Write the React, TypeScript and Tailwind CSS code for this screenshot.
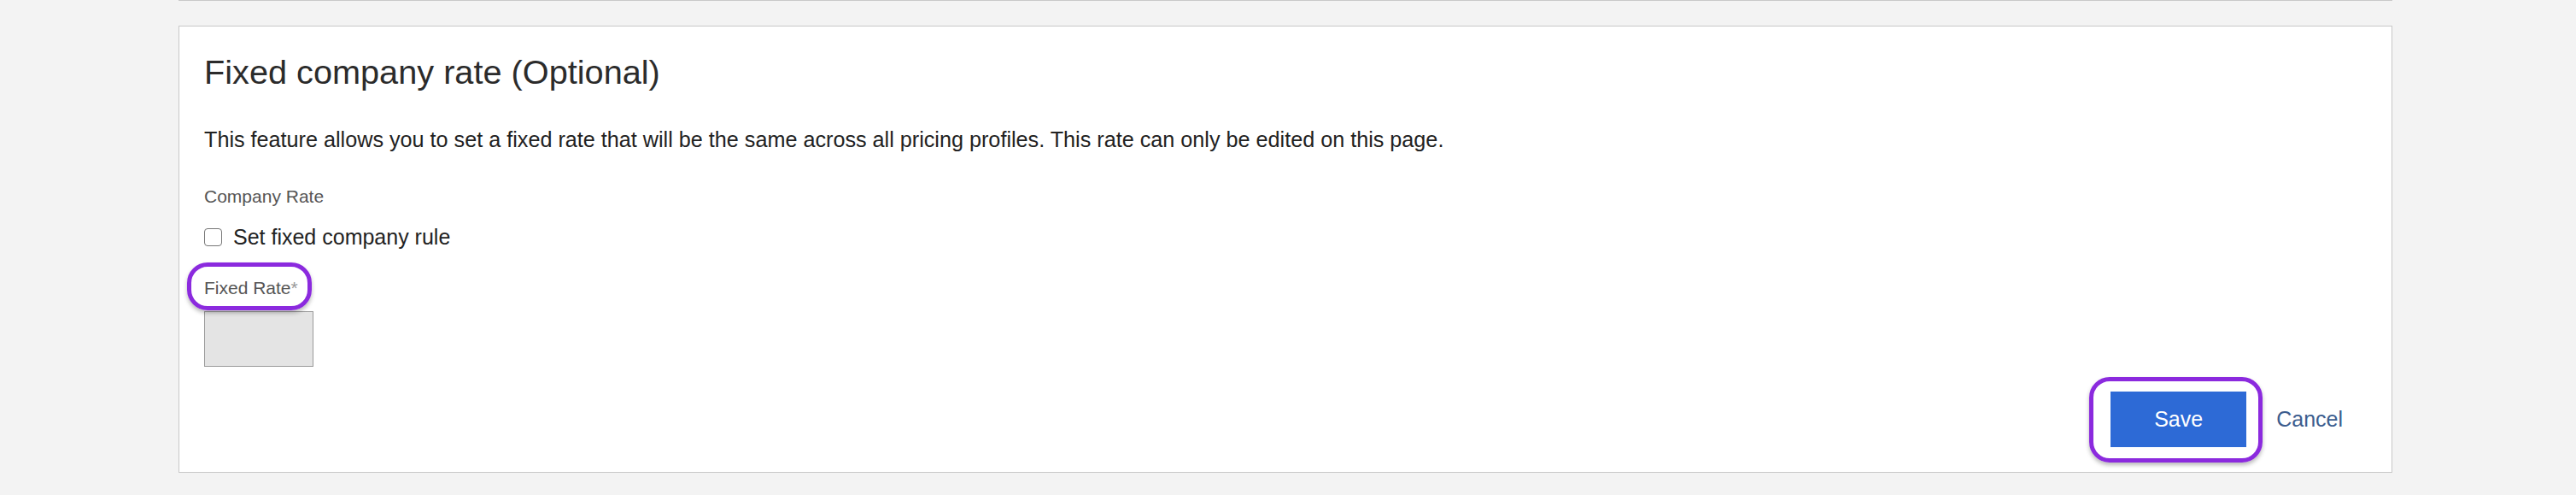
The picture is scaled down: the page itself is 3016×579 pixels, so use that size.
import { useState } from "react";

// annotation ring drawn around highlighted controls
function Ring({ className }: { className: string }) {
  return (
    <span
      className={`pointer-events-none absolute rounded-[24px] border-[5px] border-[#8b2ade] shadow-[0_3px_5px_rgba(0,0,0,0.28)] ${className}`}
    />
  );
}

export default function App() {
  const [fixed, setFixed] = useState(false);

  return (
    <div className="min-h-[579px] bg-[#f3f3f3] font-['Liberation_Sans',Arial,sans-serif]">
      <div className="ml-[209px] w-[2592px]">
        {/* bottom edge of the previous panel */}
        <div className="h-px bg-[#c8c8c8]" />

        <section className="mt-[29px] border border-[#c8c8c8] bg-white px-[29px] pt-[30px] pb-[29px]">
          <h2 className="text-[39.7px] leading-[46px] font-normal text-[#2b2b2b]">
            Fixed company rate (Optional)
          </h2>

          <p className="mt-[42px] text-[25.2px] leading-[29px] text-[#222]">
            This feature allows you to set a fixed rate that will be the same across all pricing
            profiles. This rate can only be edited on this page.
          </p>

          <div className="mt-[40px] text-[21px] leading-[24px] text-[#555]">Company Rate</div>

          <label className="mt-[21px] flex w-fit cursor-pointer items-center gap-[13px] text-[25px] leading-[29px] text-[#222]">
            <input
              type="checkbox"
              checked={fixed}
              onChange={(e) => setFixed(e.target.checked)}
              className="h-[21px] w-[21px] appearance-none rounded-[4px] border-[1.5px] border-[#767676] bg-white checked:bg-[#2d6ad6]"
            />
            Set fixed company rule
          </label>

          <div className="relative mt-[33px] w-fit text-[21px] leading-[24px] text-[#555]">
            Fixed Rate<span className="text-[#999]">*</span>
            <Ring className="-top-[18px] -right-[16px] -bottom-[14px] -left-[20px]" />
          </div>

          <input
            disabled={!fixed}
            className="mt-[15px] block h-[65px] w-[128px] border border-[#9a9a9a] bg-[#e4e4e4] px-2 text-[25px] outline-none"
          />

          <div className="mt-[29px] flex items-center justify-end">
            <div className="relative">
              <button className="h-[65px] w-[159px] bg-[#2d6ad6] text-[25px] text-white">
                Save
              </button>
              <Ring className="-top-[17px] -right-[19px] -bottom-[18px] -left-[25px]" />
            </div>
            <button className="ml-[7px] px-[28px] text-[25px] leading-[29px] text-[#3c5d8e]">
              Cancel
            </button>
          </div>
        </section>
      </div>
    </div>
  );
}
